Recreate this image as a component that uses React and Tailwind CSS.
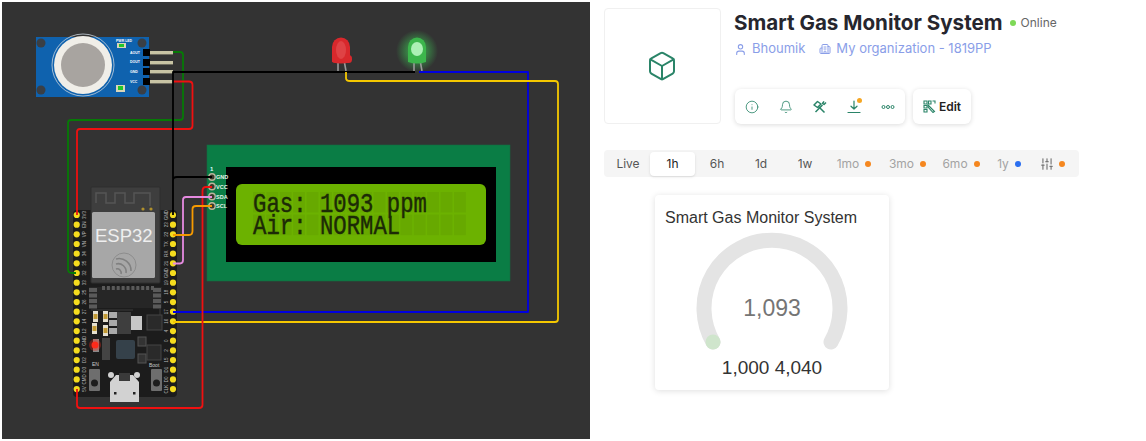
import React from "react";
import { Box, Info, Bell, User, Building2, SlidersVertical } from "lucide-react";

const leftPins = ["3V3", "EN", "VP", "VN", "34", "35", "32", "33", "25", "26", "27", "14", "12", "GND", "13", "D2", "D3", "CMD", "5V"];
const rightPins = ["GND", "23", "22", "TX", "RX", "21", "GND", "19", "18", "5", "17", "16", "4", "0", "2", "15", "D1", "D0", "CLK"];
const pinY = (i) => 215 + i * 9.67;

const GasSensor = () => (
  <g>
    <rect x="36" y="37" width="113" height="60" fill="#0f62ae" />
    {[[41, 43], [142, 43], [41, 90], [142, 90]].map(([x, y]) => (
      <circle key={x + "-" + y} cx={x} cy={y} r="4.5" fill="#3a3f45" />
    ))}
    <circle cx="83" cy="65" r="31" fill="none" stroke="#c9d3dc" strokeWidth="0.8" />
    <circle cx="83" cy="65" r="29" fill="#f0eee8" />
    <circle cx="83" cy="65" r="22" fill="#a8a4a0" />
    <rect x="117" y="43" width="9" height="5" fill="#d9d5b8" />
    <rect x="119" y="44" width="5" height="3" fill="#22c72a" />
    <rect x="116" y="85" width="9" height="7" fill="#d9d5b8" />
    <rect x="118" y="86" width="5" height="4" fill="#22c72a" />
    <g className="fill-white font-bold [font-family:'Liberation_Sans',sans-serif]" fontSize="3.5">
      <text x="116" y="42">PWR LED</text>
      <text x="130" y="54">AOUT</text>
      <text x="130" y="63">DOUT</text>
      <text x="130" y="73">GND</text>
      <text x="130" y="83">VCC</text>
    </g>
    {[49, 59, 68, 78].map((y) => (
      <g key={y}>
        <rect x="143" y={y} width="7" height="7" fill="#000" />
        <rect x="150" y={y + 2} width="23" height="3.4" fill="#c8c4a4" />
      </g>
    ))}
  </g>
);

const Led = ({ x, color, shine, green }) => (
  <g>
    {green && <circle cx={x} cy="51" r="21" fill="url(#glow)" />}
    <path d={`M${x - 3} 60V71M${x + 3} 60L${x + 5} 71`} stroke="#9a9a9a" strokeWidth="1.6" fill="none" />
    {!green && <rect x={x - 9} y="55" width="20" height="8" rx="3.5" fill={color} />}
    <path d={`M${x - 9} 62V47a9 9.500 0 0 1 18 0V62q-9 3 -18 0z`} fill={color} />
    <ellipse cx={x} cy={green ? 49 : 50} rx={green ? 6 : 5} ry={green ? 7 : 9} fill={shine} opacity={green ? 0.8 : 0.3} />
  </g>
);

const Lcd = () => {
  const cells = [];
  for (let r = 0; r < 2; r++) {
    for (let c = 0; c < 16; c++) {
      cells.push(<rect key={r + "-" + c} x={253 + c * 13.4} y={192 + r * 22.6} width="11.8" height="20.5" fill="#67a900" />);
    }
  }
  return (
    <g>
      <rect x="207" y="145" width="303" height="136" fill="#0a7d45" stroke="#166b42" strokeWidth="0.6" />
      <rect x="226" y="167" width="270" height="95" fill="#000" />
      <rect x="236" y="184" width="250" height="61" rx="6" fill="#6cb200" />
      {cells}
      <g className="[font-family:'Liberation_Mono',monospace]" fill="#1c2a06" stroke="#1c2a06" strokeWidth="0.35" fontSize="22.3">
        <text x="253" y="169.500" transform="scale(1 1.25)">Gas: 1093 ppm</text>
        <text x="253" y="187.200" transform="scale(1 1.25)">Air: NORMAL</text>
      </g>
      <text x="210" y="171" fill="#dff" fontSize="6" className="font-bold [font-family:'Liberation_Sans',sans-serif]">1</text>
      {[["GND", 177], ["VCC", 186.5], ["SDA", 196.5], ["SCL", 206]].map(([t, y]) => (
        <g key={t}>
          <circle cx="212" cy={y} r="3.2" fill="#3a3a2a" stroke="#b9b59c" strokeWidth="1.4" />
          <text x="216" y={y + 2} fill="#e4f5ea" fontSize="5.5" className="font-bold [font-family:'Liberation_Sans',sans-serif]">{t}</text>
        </g>
      ))}
    </g>
  );
};

const Esp32 = () => (
  <g>
    <rect x="73" y="210" width="104" height="187" rx="4" fill="#1c1c1c" />
    <rect x="91" y="187" width="69" height="96" rx="1" fill="#3e3e3e" stroke="#2e2e2e" />
    <path d="M96 203V193H106V203H115V193H125V203H134V193H150V206" fill="none" stroke="#565656" strokeWidth="1.5" />
    <circle cx="143" cy="209" r="1.6" fill="#b0902c" />
    <circle cx="151" cy="209" r="1.6" fill="#b0902c" />
    <rect x="92" y="212" width="63" height="66" rx="1.5" fill="#a7a7a7" />
    <text x="95" y="242" fill="#efefef" fontSize="18.500" className="[font-family:'Liberation_Sans',sans-serif]">ESP32</text>
    <circle cx="124" cy="265" r="12" fill="none" stroke="#8d8d8d" strokeWidth="1" />
    <path d="M116 259a12 12 0 0 1 15 12M116 264a8 8 0 0 1 10 9M116 269a4 4 0 0 1 5 5" fill="none" stroke="#808080" strokeWidth="1.6" />
    <rect x="89" y="287" width="73" height="21" fill="#262626" />
    {[0, 1, 2, 3, 4, 5, 6, 7, 8, 9, 10].map((i) => (
      <rect key={i} x={102 + i * 4.9} y="286" width="3" height="4" fill="#5a5a5a" />
    ))}
    {[0, 1, 2, 3].map((i) => (
      <g key={i}>
        <rect x="89" y={288 + i * 5.5} width="8" height="4" fill="#5a5a5a" />
        <rect x="153" y={288 + i * 5.5} width="8" height="4" fill="#5a5a5a" />
      </g>
    ))}
    <path d="M91 310H133M160 308V318" stroke="#3a3a3a" fill="none" />
    {[[93, 311], [103, 311], [92, 323], [103, 325]].map(([x, y]) => (
      <g key={x + "-" + y}>
        <rect x={x} y={y} width="5" height="11" fill="#e5e0d0" />
        <rect x={x + 0.5} y={y + 3} width="4" height="5" fill="#c29a34" />
      </g>
    ))}
    <rect x="109" y="312" width="9" height="6" fill="#aaa" />
    <rect x="109" y="320" width="9" height="6" fill="#aaa" />
    <rect x="109" y="328" width="9" height="6" fill="#aaa" />
    <rect x="117" y="312" width="14" height="22" fill="#3e3e3e" />
    <rect x="131" y="316" width="11" height="14" fill="#c7c7c7" />
    <rect x="147" y="315" width="15" height="15" fill="#2a2a2a" stroke="#444" />
    <rect x="116" y="340" width="19" height="19" rx="2" fill="#35414a" />
    <rect x="93" y="339" width="6" height="13" fill="#888" />
    <circle cx="95" cy="345" r="6" fill="#ff2a1a" opacity="0.35" />
    <circle cx="95" cy="345" r="3.500" fill="#ff2a1a" />
    <rect x="102" y="338" width="8" height="22" fill="#444" />
    <rect x="138" y="337" width="8" height="9" fill="#333" stroke="#555" />
    <rect x="138" y="354" width="8" height="9" fill="#333" stroke="#555" />
    <rect x="147" y="345" width="14" height="15" fill="#2a2a2a" stroke="#444" />
    <rect x="89" y="369" width="11" height="22" rx="1" fill="#6e6e6e" />
    <circle cx="94.500" cy="383" r="3.500" fill="#1d1d1d" />
    <rect x="151" y="369" width="11" height="22" rx="1" fill="#6e6e6e" />
    <circle cx="156.500" cy="383" r="3.500" fill="#1d1d1d" />
    <path d="M110 382L116 375H133L139 382V402H110z" fill="#d2d2d2" />
    <rect x="119" y="373" width="11" height="8" fill="#3a3a3a" />
    <circle cx="111" cy="375" r="3" fill="#d2d2d2" />
    <circle cx="137" cy="375" r="3" fill="#d2d2d2" />
    <rect x="114" y="392" width="2.500" height="2.500" fill="#222" />
    <rect x="133" y="392" width="2.500" height="2.500" fill="#222" />
    <text x="92" y="366" fill="#ccc" fontSize="5" className="[font-family:'Liberation_Sans',sans-serif]">EN</text>
    <text x="149" y="367" fill="#ccc" fontSize="5" className="[font-family:'Liberation_Sans',sans-serif]">Boot</text>
    {leftPins.map((t, i) => (
      <g key={i}>
        <circle cx="76.700" cy={pinY(i)} r="3.100" fill="#f5dc1e" />
        <text transform={`translate(86 ${pinY(i)}) rotate(-90)`} textAnchor="middle" fontSize="4.500" fill="#b5b5b5" className="[font-family:'Liberation_Sans',sans-serif]">{t}</text>
      </g>
    ))}
    {rightPins.map((t, i) => (
      <g key={i}>
        <circle cx="173" cy={pinY(i)} r="3.100" fill="#f5dc1e" />
        <text transform={`translate(168 ${pinY(i)}) rotate(-90)`} textAnchor="middle" fontSize="4.500" fill="#b5b5b5" className="[font-family:'Liberation_Sans',sans-serif]">{t}</text>
      </g>
    ))}
  </g>
);

const Wires = () => (
  <g fill="none" strokeWidth="1.800" strokeLinejoin="round">
    <path d="M173 52H180Q183 52 183 55V117Q183 120 180 120H71Q68 120 68 123V269Q68 273 72 273H76" stroke="#067a06" />
    <path d="M173 81.500H189Q192.500 81.500 192.500 85V126Q192.500 129 189 129H80Q77 129 77 132V215" stroke="#f01010" />
    <path d="M173 215V72H415M173 180Q173 177 177 177H212" stroke="#000" />
    <path d="M419 72H528V312H173" stroke="#0000e0" />
    <path d="M346 72V78Q346 81 350 81H555Q558 81 558 84V319Q558 322 555 322H173" stroke="#f5c800" />
    <path d="M77 389V405Q77 408 80 408H199Q202.500 408 202.500 405V191Q202.500 187 206 187H212" stroke="#f01010" />
    <path d="M173 263.500H180Q183 263.500 183 260V200Q183 197 186 197H212" stroke="#e58ae0" />
    <path d="M173 235H189Q192.500 235 192.500 231V209Q192.500 206 196 206H212" stroke="#f59a00" />
  </g>
);

const ToolsIcon = () => (
  <svg width="14" height="14" viewBox="0 0 14 14" fill="none" stroke="#2a8468" strokeWidth="1.500" strokeLinejoin="round">
    <path d="M1 5l3.500-3.500 3.500 2.500-3.500 3.500zM6 7l5.500 5.500" />
    <path d="M13 2.500l-2 2-1.500-1 1.500-2.200M9.500 5L2.500 12" />
  </svg>
);

const DownloadIcon = () => (
  <svg width="14" height="14" viewBox="0 0 14 14" fill="none" stroke="#2a8468" strokeWidth="1.200" strokeLinecap="round" strokeLinejoin="round">
    <path d="M7 1V9M4 6.200L7 9l3-2.800M1 12.500H13" />
  </svg>
);

const DotsIcon = () => (
  <svg width="14" height="14" viewBox="0 0 14 14" fill="none" stroke="#2a8468" strokeWidth="1">
    <circle cx="2.500" cy="7" r="1.500" />
    <circle cx="7" cy="7" r="1.500" />
    <circle cx="11.500" cy="7" r="1.500" />
  </svg>
);

const EditIcon = () => (
  <svg width="13" height="13" viewBox="0 0 13 13" fill="none" stroke="#2a8468" strokeWidth="1.100">
    <path d="M1 1H4V4H1zM5.500 1H8V4H5.500zM1 5.500H4V8H1zM1 9.500H4V12H1zM9.500 1H12V3.500" />
    <path d="M5 5L11.500 11.500L10 12.500L5 7z" />
  </svg>
);

const Dot = ({ color }) => <span className={"w-[6px] h-[6px] rounded-full " + color} />;

const Tab = ({ label, w, dot, active, muted }) => (
  <div className={"flex items-center justify-center gap-[6px] h-[24px] text-[12px] rounded " + w + " " + (active ? "bg-white text-[#222] shadow-sm " : muted ? "text-[#a3a3a3] " : "text-[#555] ")}>
    {label}
    {dot && <Dot color={dot} />}
  </div>
);

const Gauge = () => (
  <svg width="160" height="125" viewBox="0 0 160 125" className="mx-auto">
    <path d="M21 112A68 68 0 1 1 139 112" fill="none" stroke="#e4e4e4" strokeWidth="15" strokeLinecap="round" />
    <circle cx="21" cy="112" r="7.500" fill="#cfe5cc" />
    <text x="80" y="86" textAnchor="middle" fontSize="23" fill="#757575" className="[font-family:'Liberation_Sans',sans-serif]">1,093</text>
  </svg>
);

export default function App() {
  return (
    <div className="flex w-[1146px] h-[441px] bg-white overflow-hidden [font-family:Inter,sans-serif]">
      <div className="w-[590px] h-[441px] pl-[2px] pt-[2px] shrink-0">
        <svg width="588" height="437" viewBox="2 2 588 437" className="bg-[#333333]">
          <defs>
            <radialGradient id="glow">
              <stop offset="0%" stopColor="#3fe05a" stopOpacity="0.8" />
              <stop offset="45%" stopColor="#3fe05a" stopOpacity="0.45" />
              <stop offset="100%" stopColor="#3fe05a" stopOpacity="0" />
            </radialGradient>
          </defs>
          <GasSensor />
          <Lcd />
          <Esp32 />
          <Led x={341} color="#d8282c" shine="#f08080" />
          <Led x={417} color="#3cb64c" shine="#c8ffd0" green />
          <Wires />
        </svg>
      </div>

      <div className="flex-1 pl-[14px] pt-[8px]">
        {/* header */}
        <div className="flex gap-[13px]">
          <div className="w-[117px] h-[116px] rounded border border-[#f0f0f0] flex items-center justify-center">
            <Box size={32} strokeWidth={1.500} className="text-[#2a8468] -ml-[2px]" />
          </div>
          <div className="flex flex-col">
            <div className="flex items-center h-[30px]">
              <span className="text-[20.600px] font-bold text-[#26262e] leading-none">Smart Gas Monitor System</span>
              <span className="ml-[7px] w-[6px] h-[6px] rounded-full bg-[#7ed957]" />
              <span className="ml-[5px] text-[12px] text-[#666]">Online</span>
            </div>
            <div className="flex items-center h-[20px] mt-[1px] text-[13px] text-[#8a9ee8]">
              <User size={13} className="mr-[5px]" />
              <span>Bhoumik</span>
              <Building2 size={12} className="ml-[14px] mr-[5px]" />
              <span>My organization - 1819PP</span>
            </div>
            <div className="flex gap-[8px] mt-[30px] ml-[1px]">
              <div className="flex items-center w-[170px] h-[35px] px-[10px] justify-between rounded-md bg-white shadow-[0_1px_5px_rgba(0,0,0,0.14)]">
                <Info size={14} strokeWidth={1.400} className="text-[#2a8468]" />
                <Bell size={14} strokeWidth={1.400} className="text-[#2a8468]" />
                <ToolsIcon />
                <span className="relative flex">
                  <DownloadIcon />
                  <span className="absolute -top-[2px] -right-[1px] w-[5px] h-[5px] rounded-full bg-[#f5a623]" />
                </span>
                <DotsIcon />
              </div>
              <div className="flex items-center justify-center gap-[3px] w-[58px] h-[35px] rounded-md bg-white shadow-[0_1px_5px_rgba(0,0,0,0.14)] text-[12px] font-semibold text-[#222]">
                <EditIcon />
                Edit
              </div>
            </div>
          </div>
        </div>

        {/* time range tabs */}
        <div className="flex items-center w-[475px] h-[27px] mt-[26px] pl-[2px] rounded bg-[#f5f5f5]">
          <Tab label="Live" w="w-[44px]" />
          <Tab label="1h" w="w-[45px]" active />
          <Tab label="6h" w="w-[44px]" />
          <Tab label="1d" w="w-[44px]" />
          <Tab label="1w" w="w-[44px]" />
          <Tab label="1mo" w="w-[54px]" dot="bg-[#f5871f]" muted />
          <Tab label="3mo" w="w-[53px]" dot="bg-[#f5871f]" muted />
          <Tab label="6mo" w="w-[54px]" dot="bg-[#f5871f]" muted />
          <Tab label="1y" w="w-[42px]" dot="bg-[#2b6ff0]" muted />
          <div className="flex items-center gap-[5px] ml-[10px] text-[#777]">
            <SlidersVertical size={14} />
            <Dot color="bg-[#f5871f]" />
          </div>
        </div>

        {/* gauge card */}
        <div className="w-[234px] h-[195px] ml-[51px] mt-[18px] pt-[13px] rounded bg-white shadow-[0_1px_6px_rgba(0,0,0,0.13)]">
          <div className="pl-[10px] text-[16px] leading-[20px] text-[#333] [font-family:'Liberation_Sans',sans-serif]">Smart Gas Monitor System</div>
          <div className="mt-[2px]">
            <Gauge />
          </div>
          <div className="text-center text-[19px] leading-[22px] text-[#333] mt-[2px] [font-family:'Liberation_Sans',sans-serif]">1,000 4,040</div>
        </div>
      </div>
    </div>
  );
}
